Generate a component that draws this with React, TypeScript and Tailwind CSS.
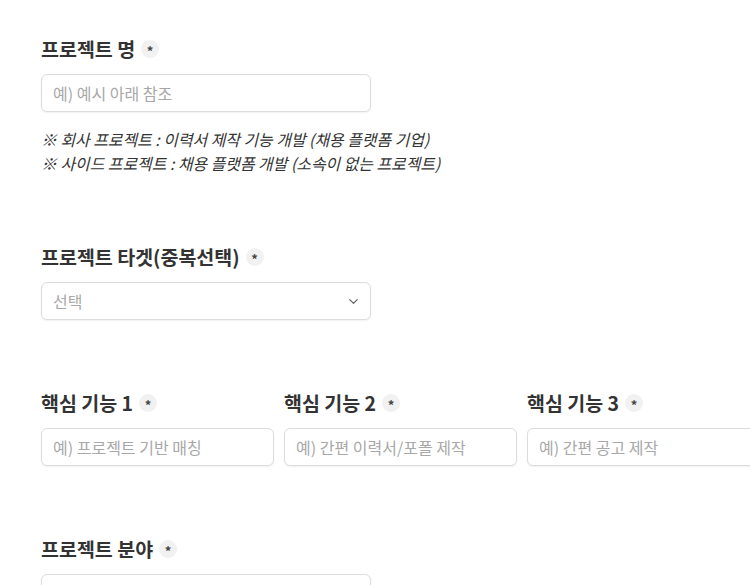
import { ChevronDown } from "lucide-react";

const font = { fontFamily: '"Noto Sans CJK KR", "Noto Sans", sans-serif' };

function Label({ text }: { text: string }) {
  return (
    <div className="flex items-center gap-[6px] h-[26px]">
      <span className="text-[19.5px] font-bold text-[#333] leading-[26px] whitespace-nowrap">{text}</span>
      <span className="w-[18px] h-[18px] rounded-full bg-[#f1f1f1] flex items-center justify-center text-[13px] font-bold text-[#444] leading-none pt-[3px]">
        *
      </span>
    </div>
  );
}

function Field({ placeholder }: { placeholder: string }) {
  return (
    <div className="h-[38px] rounded-[6px] border border-[#dcdcdc] bg-white shadow-[0_1px_2px_rgba(0,0,0,0.06)] flex items-center px-[11px]">
      <span className="text-[16px] text-[#a8a8a8] whitespace-nowrap">{placeholder}</span>
    </div>
  );
}

export default function App() {
  return (
    <div className="w-[750px] h-[585px] overflow-hidden bg-white" style={font}>
      <div className="pl-[41px] pt-[36px] flex flex-col gap-[70px] w-[790px]">
        <section className="w-[330px] -mb-[2px]">
          <Label text="프로젝트 명" />
          <div className="mt-[12px]">
            <Field placeholder="예) 예시 아래 참조" />
          </div>
          <div className="mt-[16px] italic text-[15.9px] leading-[24px] text-[#333] whitespace-nowrap">
            <p>※ 회사 프로젝트 : 이력서 제작 기능 개발 (채용 플랫폼 기업)</p>
            <p>※ 사이드 프로젝트 : 채용 플랫폼 개발 (소속이 없는 프로젝트)</p>
          </div>
        </section>

        <section className="w-[330px]">
          <Label text="프로젝트 타겟(중복선택)" />
          <div className="mt-[12px] h-[38px] rounded-[6px] border border-[#dcdcdc] bg-white shadow-[0_1px_2px_rgba(0,0,0,0.06)] flex items-center justify-between pl-[11px] pr-[9px]">
            <span className="text-[16px] text-[#a8a8a8]">선택</span>
            <ChevronDown size={15} strokeWidth={2} className="text-[#666]" />
          </div>
        </section>

        <section className="grid grid-cols-3 gap-[10px] w-[719px]">
          {[
            ["핵심 기능 1", "예) 프로젝트 기반 매칭"],
            ["핵심 기능 2", "예) 간편 이력서/포폴 제작"],
            ["핵심 기능 3", "예) 간편 공고 제작"],
          ].map(([label, ph]) => (
            <div key={label}>
              <Label text={label} />
              <div className="mt-[12px]">
                <Field placeholder={ph} />
              </div>
            </div>
          ))}
        </section>

        <section className="w-[330px]">
          <Label text="프로젝트 분야" />
          <div className="mt-[12px]">
            <Field placeholder="" />
          </div>
        </section>
      </div>
    </div>
  );
}
